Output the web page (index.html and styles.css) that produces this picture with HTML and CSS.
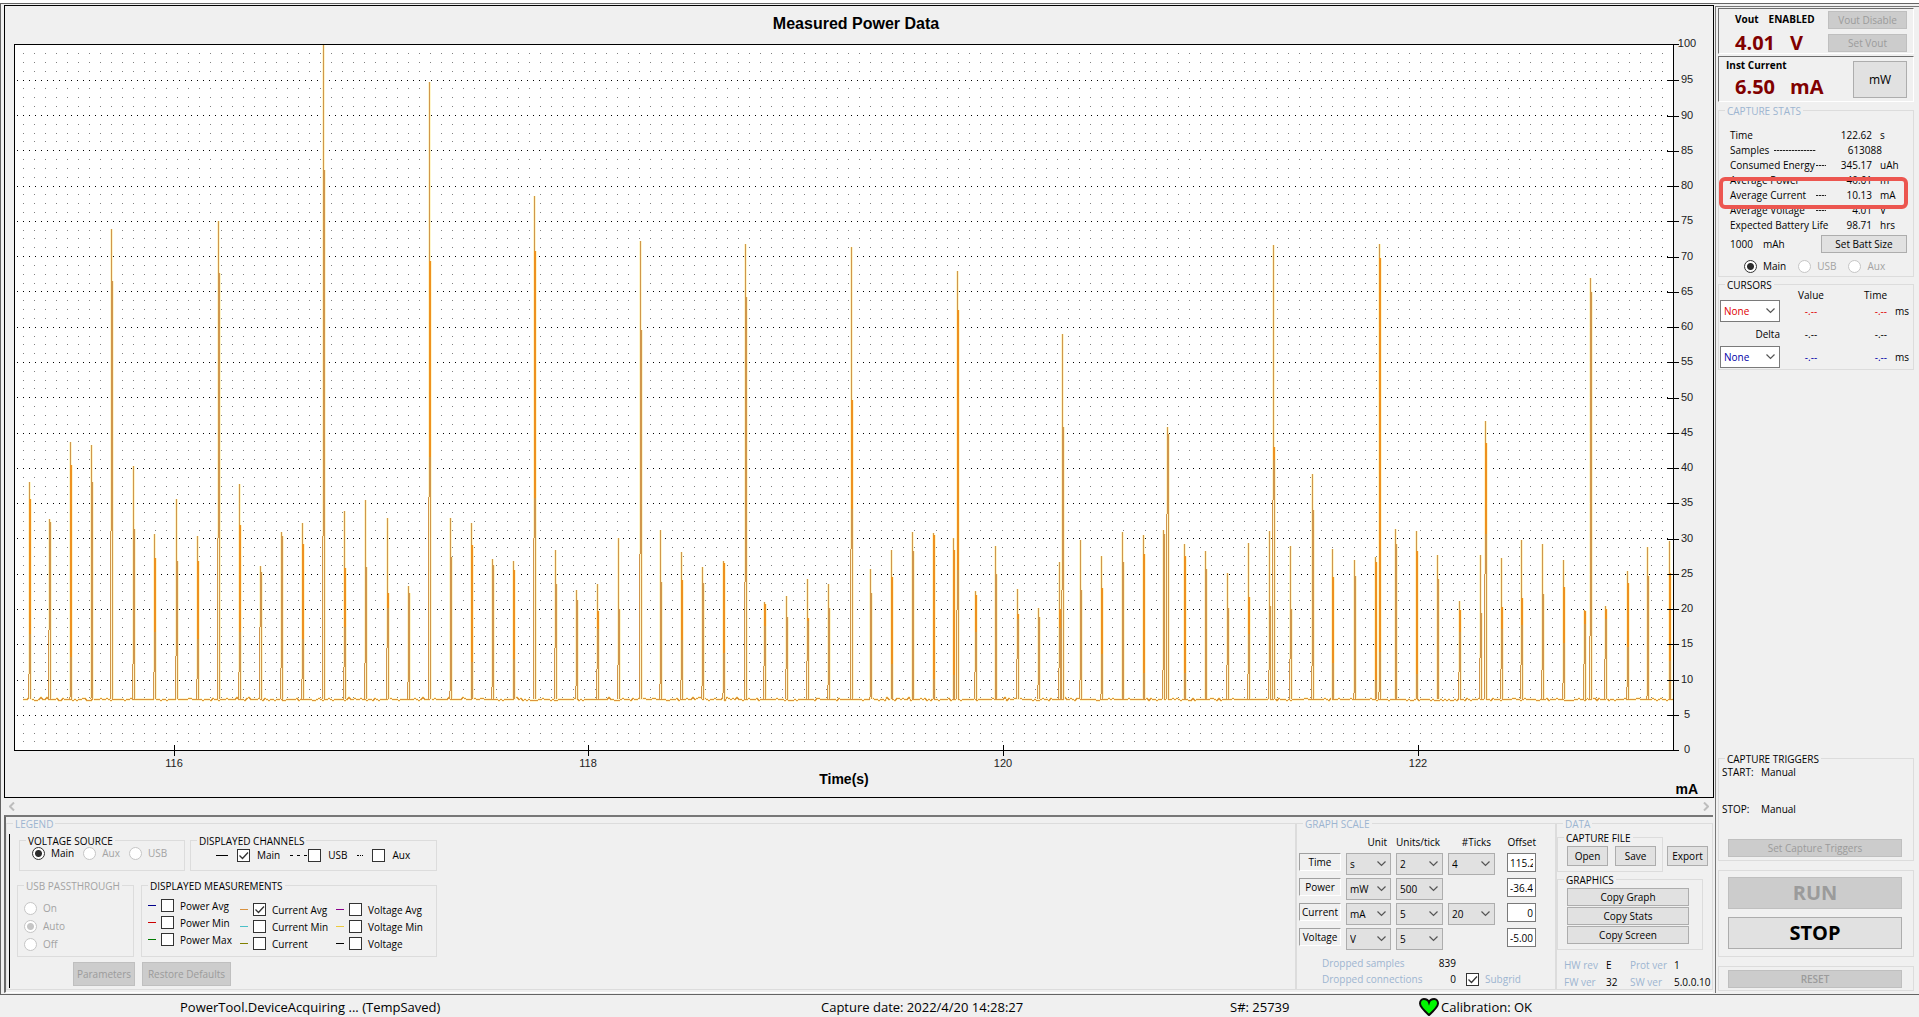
FILE: index.html
```html
<!DOCTYPE html>
<html lang="en">
<head>
<meta charset="utf-8">
<title>PowerTool</title>
<link rel="stylesheet" href="styles.css">
</head>
<body>
<main class="app">
  <div class="workspace">
    <section class="chart">
      <h1 class="chart-title">Measured Power Data</h1>
      <div class="plot" id="plot">
        <svg class="trace" id="trace" shape-rendering="crispEdges"></svg>
      </div>
      <div class="chart-foot">
        <span class="x-title">Time(s)</span>
        <span class="y-unit">mA</span>
      </div>
    </section>
    <div class="scroller">
      <svg width="6" height="9" viewBox="0 0 6 9"><path d="M5 .5 1 4.500 5 8.500" fill="none" stroke="#bdbdbd" stroke-width="2"/></svg>
      <svg width="6" height="9" viewBox="0 0 6 9"><path d="M1 .5 5 4.500 1 8.500" fill="none" stroke="#bdbdbd" stroke-width="2"/></svg>
    </div>
    <section class="panel">
      <fieldset class="group legend-group">
        <legend class="blue">LEGEND</legend>
        <div class="legend-body">
          <div class="legend-row top">
            <fieldset class="group source">
              <legend>VOLTAGE SOURCE</legend>
              <div class="options">
                <label><input type="radio" name="source" checked>Main</label>
                <label class="off"><input type="radio" name="source" disabled>Aux</label>
                <label class="off"><input type="radio" name="source" disabled>USB</label>
              </div>
            </fieldset>
            <fieldset class="group channels">
              <legend>DISPLAYED CHANNELS</legend>
              <div class="channel-list">
                <label><i class="line solid"></i><input type="checkbox" checked>Main</label>
                <label><i class="line dashed"></i><input type="checkbox">USB</label>
                <label><i class="line dotted"></i><input type="checkbox">Aux</label>
              </div>
            </fieldset>
          </div>
          <div class="legend-row">
            <fieldset class="group pass">
              <legend class="off">USB PASSTHROUGH</legend>
              <div class="pass-list off">
                <label><input type="radio" name="pass" disabled>On</label>
                <label><input type="radio" name="pass" disabled checked>Auto</label>
                <label><input type="radio" name="pass" disabled>Off</label>
              </div>
            </fieldset>
            <fieldset class="group measures">
              <legend>DISPLAYED MEASUREMENTS</legend>
              <div class="measure-grid">
                <div class="measure-col first">
                  <label><i class="key navy"></i><input type="checkbox">Power Avg</label>
                  <label><i class="key red"></i><input type="checkbox">Power Min</label>
                  <label><i class="key green"></i><input type="checkbox">Power Max</label>
                </div>
                <div class="measure-col">
                  <label><i class="key orange"></i><input type="checkbox" checked>Current Avg</label>
                  <label><i class="key cyan"></i><input type="checkbox">Current Min</label>
                  <label><i class="key olive"></i><input type="checkbox">Current</label>
                </div>
                <div class="measure-col">
                  <label><i class="key purple"></i><input type="checkbox">Voltage Avg</label>
                  <label><i class="key yellow"></i><input type="checkbox">Voltage Min</label>
                  <label><i class="key black"></i><input type="checkbox">Voltage</label>
                </div>
              </div>
            </fieldset>
          </div>
          <div class="legend-buttons">
            <button class="btn params" disabled>Parameters</button>
            <button class="btn restore" disabled>Restore Defaults</button>
          </div>
        </div>
      </fieldset>

      <fieldset class="group scale-group">
        <legend class="blue">GRAPH SCALE</legend>
        <div class="scale-grid">
          <span></span><span class="head">Unit</span><span class="head">Units/tick</span><span class="head">#Ticks</span><span class="head">Offset</span>
          <span class="tag">Time</span>
          <select class="combo" aria-label="Time unit"><option>s</option></select>
          <select class="combo" aria-label="Time units per tick"><option>2</option></select>
          <select class="combo" aria-label="Time ticks"><option>4</option></select>
          <input class="num cut" type="text" aria-label="Time offset" value="115.27">
          <span class="tag">Power</span>
          <select class="combo" aria-label="Power unit"><option>mW</option></select>
          <select class="combo" aria-label="Power units per tick"><option>500</option></select>
          <span></span>
          <input class="num cut" type="text" aria-label="Power offset" value="-36.43">
          <span class="tag">Current</span>
          <select class="combo" aria-label="Current unit"><option>mA</option></select>
          <select class="combo" aria-label="Current units per tick"><option>5</option></select>
          <select class="combo" aria-label="Current ticks"><option>20</option></select>
          <input class="num" type="text" aria-label="Current offset" value="0">
          <span class="tag">Voltage</span>
          <select class="combo" aria-label="Voltage unit"><option>V</option></select>
          <select class="combo" aria-label="Voltage units per tick"><option>5</option></select>
          <span></span>
          <input class="num" type="text" aria-label="Voltage offset" value="-5.00">
        </div>
        <div class="dropped">
          <span class="blue">Dropped samples</span><span class="count">839</span><span></span>
          <span class="blue">Dropped connections</span><span class="count">0</span>
          <label class="blue"><input type="checkbox" checked>Subgrid</label>
        </div>
      </fieldset>

      <fieldset class="group data-group">
        <legend class="blue">DATA</legend>
        <div class="file-row">
          <fieldset class="group file">
            <legend>CAPTURE FILE</legend>
            <div class="file-buttons">
              <button class="btn">Open</button>
              <button class="btn">Save</button>
            </div>
          </fieldset>
          <button class="btn export">Export</button>
        </div>
        <fieldset class="group graphics">
          <legend>GRAPHICS</legend>
          <div class="copy-list">
            <button class="btn">Copy Graph</button>
            <button class="btn">Copy Stats</button>
            <button class="btn">Copy Screen</button>
          </div>
        </fieldset>
        <dl class="versions">
          <dt>HW rev</dt><dd>E</dd><dt>Prot ver</dt><dd>1</dd>
          <dt>FW ver</dt><dd>32</dd><dt>SW ver</dt><dd>5.0.0.10</dd>
        </dl>
      </fieldset>
    </section>
  </div>

  <aside class="side">
    <section class="readout">
      <div class="readout-text">
        <div class="readout-head"><b>Vout</b><b>ENABLED</b></div>
        <div class="big"><span>4.01</span><span>V</span></div>
      </div>
      <div class="readout-buttons">
        <button class="btn" disabled>Vout Disable</button>
        <button class="btn" disabled>Set Vout</button>
      </div>
    </section>
    <section class="readout">
      <div class="readout-text">
        <div class="readout-head inst"><b>Inst Current</b></div>
        <div class="big"><span>6.50</span><span>mA</span></div>
      </div>
      <button class="btn unit">mW</button>
    </section>
    <fieldset class="group stats">
      <legend class="blue">CAPTURE STATS</legend>
      <table class="stat-table">
        <tr><th>Time</th><td>122.62</td><td class="u">s</td></tr>
        <tr><th><span>Samples<i class="leader long"></i></span></th><td class="wide" colspan="2">613088</td></tr>
        <tr><th><span>Consumed Energy<i class="leader"></i></span></th><td>345.17</td><td class="u">uAh</td></tr>
        <tr><th>Average Power</th><td>40.61</td><td class="u">m</td></tr>
        <tr class="marked"><th><span>Average Current<i class="leader"></i></span></th><td>10.13</td><td class="u">mA</td></tr>
        <tr><th><span>Average Voltage<i class="leader"></i></span></th><td>4.01</td><td class="u">V</td></tr>
        <tr><th>Expected Battery Life</th><td>98.71</td><td class="u">hrs</td></tr>
      </table>
      <div class="battery"><span>1000</span><span>mAh</span><button class="btn">Set Batt Size</button></div>
      <div class="options stat-options">
        <label><input type="radio" name="stat" checked>Main</label>
        <label class="off"><input type="radio" name="stat" disabled>USB</label>
        <label class="off"><input type="radio" name="stat" disabled>Aux</label>
      </div>
    </fieldset>
    <fieldset class="group cursors">
      <legend>CURSORS</legend>
      <div class="cursor-grid">
        <span></span><span>Value</span><span class="time">Time</span><span></span>
        <select class="combo white c-red" aria-label="Cursor 1"><option>None</option></select><span class="c-red">-.--</span><span class="time c-red">-.--</span><span class="ms">ms</span>
        <span class="delta">Delta</span><span>-.--</span><span class="time">-.--</span><span></span>
        <select class="combo white c-blue" aria-label="Cursor 2"><option>None</option></select><span class="c-blue">-.--</span><span class="time c-blue">-.--</span><span class="ms">ms</span>
      </div>
    </fieldset>
    <div class="side-space"></div>
    <fieldset class="group triggers">
      <legend>CAPTURE TRIGGERS</legend>
      <dl class="trigger-list"><dt>START:</dt><dd>Manual</dd><dt>STOP:</dt><dd>Manual</dd></dl>
      <button class="btn" disabled>Set Capture Triggers</button>
    </fieldset>
    <div class="group run-box">
      <button class="btn large" disabled>RUN</button>
      <button class="btn large">STOP</button>
    </div>
    <div class="group reset-box"><button class="btn reset" disabled>RESET</button></div>
  </aside>
</main>
<footer class="status">
  <span>PowerTool.DeviceAcquiring ... (TempSaved)</span>
  <span>Capture date: 2022/4/20 14:28:27</span>
  <span>S#: 25739</span>
  <span class="calib"><svg width="20" height="18" viewBox="0 0 20 18"><path d="M10 4.500C9 1.500 6.500 1 4.800 1 2.500 1 1 3 1 5.500 1 9 5 12.500 10 17c5-4.500 9-8 9-11.500C19 3 17.500 1 15.200 1 13.500 1 11 1.500 10 4.500z" fill="#00f800" stroke="#0a0a0a" stroke-width="2"/></svg>Calibration: OK</span>
</footer>
<script src="script.js"></script>
</body>
</html>
```
FILE: styles.css
```css
* { box-sizing: border-box; }

body {
  margin: 0;
  min-height: 100vh;
  display: flex;
  flex-direction: column;
  background: #f0f0f0;
  color: #000;
  font: 10px/14px "Open Sans", "Noto Sans", sans-serif;
}

button, input, select { font: inherit; color: inherit; margin: 0; }

.app {
  flex: 1;
  display: flex;
  margin-top: 3px;
  padding: 1px 0 1px 3px;
  border: solid #646464;
  border-width: 1px 0 1px 1px;
  box-shadow: 0 -3px #fff;
}
.workspace { flex: 1; min-width: 0; display: flex; flex-direction: column; }

/* Chart */
.chart {
  flex: 1;
  display: flex;
  flex-direction: column;
  margin-right: 1px;
  padding: 0 39px 0 9px;
  border: 1px solid #000;
  font-family: "Liberation Sans", Arial, sans-serif;
}
.chart-title { margin: 0; height: 38px; font-size: 16px; line-height: 36px; text-align: center; padding-left: 24px; }
.plot { flex: 1; position: relative; border: 1px solid #000; background: #fff; min-height: 300px; }
.trace { position: absolute; inset: 0; width: 100%; height: 100%; }
.x-tick { position: absolute; bottom: -6px; width: 1px; height: 11px; background: #000; }
.y-tick { position: absolute; right: -6px; width: 12px; height: 1px; background: #000; }
.x-label, .y-label { position: absolute; width: 20px; font-size: 11px; line-height: 12px; text-align: center; color: #222; }
.x-label { bottom: -19px; margin-left: -10px; }
.y-label { right: -24px; margin-top: -7px; }
.chart-foot { height: 46px; position: relative; font-size: 14px; line-height: 16px; font-weight: bold; }
.x-title { display: block; padding-top: 20px; text-align: center; }
.y-unit { position: absolute; right: -24px; bottom: 0; }

.scroller { height: 17px; display: flex; justify-content: space-between; align-items: center; padding: 0 6px 0 5px; }

/* Group boxes */
.group { margin: 0; padding: 0; min-width: 0; border: 1px solid #dcdcdc; }
legend { height: 12px; margin-left: 6px; padding: 0 2px; line-height: 14px; }
.blue { color: #9db5d0; }
.off { color: #a3a3a3; }

.panel {
  display: flex;
  margin-right: 2px;
  padding-bottom: 2px;
  border: solid #6a6a6a;
  border-width: 2px 0 0 2px;
  border-top-color: #777;
  border-bottom: 1px solid #fff;
}
label { display: flex; align-items: center; gap: 6px; white-space: nowrap; }

input[type="radio"], input[type="checkbox"] {
  appearance: none;
  width: 13px;
  height: 13px;
  flex: none;
  border: 1px solid #333;
  background: #fff;
}
input[type="radio"] { border-radius: 50%; }
input[type="radio"]:disabled { border-color: #c6c6c6; }
input[type="radio"]:checked { background: radial-gradient(circle, #2b2b2b 0 3px, #fff 4px); }
input[type="radio"]:checked:disabled { background: radial-gradient(circle, #c6c6c6 0 3px, #fff 4px); }
input[type="checkbox"]:checked {
  background: #fff url("data:image/svg+xml,%3Csvg xmlns='http://www.w3.org/2000/svg' viewBox='0 0 11 11'%3E%3Cpath d='M1.500 5.500l3 3 5.500-6' fill='none' stroke='%23333' stroke-width='1.300'/%3E%3C/svg%3E");
}

.btn {
  padding: 0;
  height: 18px;
  border: 1px solid #adadad;
  background: #e1e1e1;
  color: #000;
  line-height: 14px;
  text-align: center;
  white-space: nowrap;
}
.btn:disabled { border-color: #bfbfbf; background: #ccc; color: #9b9b9b; }

/* Legend */
.legend-group { flex: 1; border-left-color: #e4e4e4; }
.legend-body { margin: 5px 0 0 2px; min-height: 154px; border-left: 1px solid #000; }
.legend-row { display: flex; gap: 7px; padding-left: 7px; margin-bottom: 5px; }
.legend-row.top { gap: 5px; padding-left: 9px; margin-bottom: 8px; }
.source { width: 166px; height: 37px; }
.channels { width: 247px; height: 37px; }
.options { display: flex; gap: 9px; padding-left: 12px; }
.channel-list { display: flex; gap: 10px; padding: 2px 0 0 25px; }
.channel-list label { gap: 7px; }
.line { width: 12px; border-top: 1px solid #000; }
.channel-list .line { margin-right: 2px; }
.channel-list .dashed { width: 18px; margin-right: -7px; border: 0; height: 1px; background: repeating-linear-gradient(90deg, #000 0 3px, transparent 3px 7px); }
.channel-list .dotted { width: 6px; border-top-style: dotted; }
.pass { width: 117px; height: 78px; }
.pass-list { padding: 8px 0 0 6px; }
.pass-list label { height: 18px; }
.measures { width: 296px; height: 78px; }
.measure-grid { display: flex; padding-left: 6px; }
.measure-col { width: 96px; padding-top: 10px; }
.measure-col.first { width: 92px; padding-top: 6px; }
.measure-col label { height: 17px; }
.key { width: 8px; height: 1px; margin-right: -1px; background: #000; }
.navy { background: #00008b; }
.red { background: #c00; }
.green { background: #007a00; }
.orange { background: #d8923f; }
.cyan { background: #4bc0c8; }
.olive { background: #808000; }
.purple { background: #8b008b; }
.yellow { background: #eecb3c; }
.legend-buttons { display: flex; gap: 7px; padding-left: 63px; }
.legend-buttons .btn { height: 24px; }
.params { width: 62px; }
.restore { width: 89px; }

/* Graph scale */
.scale-group { width: 260px; }
.scale-grid {
  display: grid;
  grid-template-columns: 42px 45px 47px 47px 36px;
  grid-template-rows: 16px repeat(4, 22px);
  row-gap: 3px;
  column-gap: 5px;
  padding: 5px 0 0 2px;
}
.scale-grid .head { text-align: right; line-height: 16px; padding-right: 4px; white-space: nowrap; }
.scale-grid .head:nth-child(5) { padding-right: 0; }
.tag { height: 18px; border: 1px solid; border-color: #a0a0a0 #fff #fff #a0a0a0; text-align: center; line-height: 17px; }
.combo {
  appearance: none;
  width: 100%;
  height: 22px;
  padding: 0 0 0 3px;
  border: 1px solid #adadad;
  border-radius: 0;
  background: #e1e1e1 url("data:image/svg+xml,%3Csvg xmlns='http://www.w3.org/2000/svg' width='9' height='6'%3E%3Cpath d='M.5.5l4 4 4-4' fill='none' stroke='%23555' stroke-width='1.200'/%3E%3C/svg%3E") no-repeat right 4px center;
}
.combo.white { background-color: #fff; border-color: #7a7a7a; }
.num { width: 29px; height: 19px; justify-self: end; padding: 0 2px; border: 1px solid #7a7a7a; background: #fff; text-align: right; }
.num.cut { text-align: left; }
.dropped { display: grid; grid-template-columns: 100px 34px 1fr; row-gap: 2px; padding: 6px 0 0 25px; white-space: nowrap; }
.dropped label { padding-left: 10px; }
.count { text-align: right; }

/* Data */
.data-group { width: 157px; }
.file-row { display: flex; align-items: flex-start; gap: 4px; padding-top: 2px; }
.file { width: 106px; height: 41px; }
.file-buttons { display: flex; gap: 7px; padding: 3px 0 0 9px; }
.file-buttons .btn, .export { width: 41px; height: 20px; }
.export { margin-top: 15px; }
.graphics { width: 146px; height: 77px; margin: 1px 0 0; }
.copy-list { display: flex; flex-direction: column; gap: 1px; padding: 3px 0 0 9px; }
.copy-list .btn { width: 122px; }
.versions { display: grid; grid-template-columns: 42px 24px 44px auto; row-gap: 3px; margin: 8px 0 0; padding-left: 7px; }
.versions dt { color: #9db5d0; }
.versions dd { margin: 0; }

/* Side column */
.side {
  width: 204px;
  display: flex;
  flex-direction: column;
  margin-top: 1px;
  padding: 1px 5px 2px 2px;
  border: solid #777;
  border-width: 1px 0 0 1px;
}
.readout {
  display: flex;
  justify-content: space-between;
  height: 46px;
  margin-bottom: 2px;
  padding: 2px 6px 0 0;
  border: 1px solid;
  border-color: #6d6d6d #fff #fff #6d6d6d;
}
.readout-head { display: flex; gap: 10px; padding-left: 16px; line-height: 16px; }
.readout-head.inst { padding-left: 7px; line-height: 12px; }
.big { display: flex; gap: 15px; padding-left: 16px; color: #800000; font-size: 20px; line-height: 32px; font-weight: bold; }
.readout-buttons { display: flex; flex-direction: column; gap: 5px; }
.readout-buttons .btn { width: 79px; }
.unit { width: 54px; height: 37px; margin-top: 2px; font-size: 12px; }

.stats { height: 173px; }
.stat-table { table-layout: fixed; border-spacing: 0; width: 180px; margin: 12px 0 0 11px; }
.stat-table th, .stat-table td { padding: 0; height: 15px; line-height: 15px; font-weight: normal; text-align: right; white-space: nowrap; }
.stat-table th { width: 100px; text-align: left; }
.stat-table th span { display: flex; align-items: center; }
.stat-table td { width: 42px; }
.stat-table .wide { width: auto; padding-right: 28px; }
.stat-table .u { width: 38px; padding-left: 8px; text-align: left; }
.leader { width: 10px; height: 1px; margin-left: auto; margin-right: 4px; background: repeating-linear-gradient(90deg, #222 0 2px, #aaa 2px 3px); }
.leader.long { width: 42px; margin-right: 14px; }
.marked { position: relative; }
.marked::after {
  content: "";
  position: absolute;
  inset: -11px 2px -6px -11px;
  border: 4px solid #ec5650;
  border-radius: 6px;
}
.battery { display: flex; align-items: center; gap: 10px; padding: 2px 6px 0 11px; }
.battery .btn { width: 86px; margin-left: auto; }
.stat-options { gap: 12px; padding: 6px 0 0 25px; }

.cursors { height: 92px; margin-top: 1px; }
.cursor-grid {
  display: grid;
  grid-template-columns: 60px 62px 45px 1fr;
  grid-template-rows: 10px 22px 24px 22px;
  align-items: center;
  text-align: center;
  padding-left: 1px;
}
.cursor-grid .delta, .cursor-grid .time { text-align: right; }
.cursor-grid .ms { text-align: left; padding-left: 8px; }
.c-red { color: #e00000; }
.c-blue { color: #0000a8; }

.side-space { flex: 1; }
.triggers { height: 109px; margin-bottom: 9px; }
.trigger-list { display: grid; grid-template-columns: 39px auto; row-gap: 23px; margin: 1px 0 23px; padding-left: 3px; }
.trigger-list dd { margin: 0; }
.triggers .btn, .run-box .btn, .reset-box .btn { display: block; width: 174px; margin-left: 9px; }
.run-box { height: 87px; margin-bottom: 9px; padding-top: 6px; }
.run-box .btn { height: 32px; margin-bottom: 8px; font-size: 20px; line-height: 28px; font-weight: bold; }
.reset-box { padding: 3px 0 2px; }
.reset-box .reset { font-weight: 600; }

.status {
  display: grid;
  grid-template-columns: 641fr 409fr 189fr 500fr;
  align-items: center;
  height: 22px;
  padding: 2px 0 0 180px;
  font-size: 13px;
  line-height: 18px;
  white-space: nowrap;
}
.calib { display: flex; align-items: center; gap: 2px; }
```
FILE: script.js
```js
// Pulse coordinates are stored for a 1658 x 705 plot and scaled to its real size.
const W = 1658, H = 705, BASE = 654, OX = 15, OY = 45;
const NS = "http://www.w3.org/2000/svg";
const svg = document.getElementById("trace");
const plot = document.getElementById("plot");
const DULL = "#d0964c", BRIGHT = "#ee9020", HALO = "#fff6cc";

// Pulses: x, peak, where it widens, where it splits, bright flag.
const pulses = [
  [29,482,499,634,1],[49,519,522,590,0],[70,442,465,657,1],[91,445,482,658,0],[111,229,281,491,0],
  [133,466,529,624,0],[154,534,558,632,1],[176,499,561,616,0],[197,536,561,639,1],[218,221,273,498,0],
  [239,484,525,632,1],[260,566,572,587,0],[281,532,536,628,0],[302,523,544,639,1],[323,44,170,496,0],
  [344,511,568,627,1],[365,500,567,623,0],[387,518,593,608,1],[408,586,593,642,0],[429,82,261,457,1],
  [450,518,557,651,0],[471,523,545,662,1],[492,559,565,647,0],[513,561,570,659,1],[534,196,251,498,1],
  [555,550,584,608,0],[576,590,600,646,0],[597,584,611,629,1],[618,538,609,625,0],[640,241,330,514,0],
  [660,530,582,644,0],[681,552,580,640,1],[702,567,583,646,0],[723,561,563,653,1],[745,244,297,542,0],
  [764,602,604,626,1],[786,596,617,629,0],[807,579,618,621,1],[828,584,608,645,0],[851,247,400,509,1],
  [870,569,593,657,0],[891,550,577,664,1],[912,532,551,667,0],[933,533,535,679,1],[953,538,550,675,1],
  [957,271,310,570,1],[975,591,595,632,1],[995,546,574,664,0],[1017,589,614,619,1],[1038,608,617,645,0],
  [1059,562,609,628,1],[1062,334,427,550,0],[1080,540,590,640,0],[1101,556,588,654,1],[1122,532,562,660,0],
  [1143,535,554,673,1],[1163,530,534,630,0],[1167,427,434,474,0],[1184,544,556,673,1],[1205,551,569,669,0],
  [1227,573,608,625,0],[1248,543,597,634,1],[1269,531,606,630,0],[1273,245,447,460,1],[1290,546,609,619,0],
  [1312,474,510,626,0],[1332,549,577,663,1],[1354,560,576,653,0],[1375,557,562,680,1],[1379,244,258,652,1],
  [1395,529,544,674,0],[1416,531,551,674,1],[1437,555,579,666,0],[1459,601,610,632,1],[1480,555,613,618,0],
  [1485,421,443,534,1],[1501,558,607,629,1],[1521,540,598,625,1],[1542,544,594,630,0],[1563,560,587,643,1],
  [1584,610,611,624,1],[1590,278,292,596,0],[1605,606,609,619,1],[1627,571,583,647,1],[1647,547,576,656,0],
  [1669,541,573,661,1]
];

function add(tag, attrs) {
  const el = document.createElementNS(NS, tag);
  for (const k in attrs) el.setAttribute(k, attrs[k]);
  svg.appendChild(el);
}
function bar(x, y1, y2, w, fill) {
  if (y2 > y1) add("rect", { x: x, y: y1, width: w, height: y2 - y1, fill: fill });
}

function draw() {
  const w = plot.clientWidth, h = plot.clientHeight;
  const sx = function (x) { return Math.round((x - OX) * w / W); };
  const sy = function (y) { return Math.round((y - OY) * h / H); };
  const base = Math.round(BASE * h / H);
  svg.textContent = "";
  svg.setAttribute("viewBox", "0 0 " + w + " " + h);

  // Dotted grid: every fourth row is a major one.
  for (let k = 1; k < 80; k++) {
    const y = sy(44.3 + 8.825 * k) + 0.5;
    const major = k % 4 === 0;
    add("line", {
      x1: major ? 2 : 8, x2: w, y1: y, y2: y,
      stroke: major ? "#000" : "#808080",
      "stroke-dasharray": major ? "1 5" : "1 10"
    });
  }

  // Slightly noisy idle current between the pulses.
  let points = "", seed = 7;
  for (let x = 8; x <= w; x += 2) {
    seed = (seed * 1103515245 + 12345) % 2147483648;
    const r = seed / 2147483648;
    const y = base + (r > 0.96 ? -2 : r > 0.8 ? 1 : r > 0.65 ? -1 : 0) + 0.5;
    points += x + "," + y + " ";
  }
  add("polyline", { points: points, fill: "none", stroke: HALO, "stroke-width": 3 });
  add("polyline", { points: points, fill: "none", stroke: "#dc943a", "stroke-width": 1 });

  pulses.forEach(function (p) {
    const x = sx(p[0]), top = sy(p[1]), wide = sy(p[2]), split = sy(p[3]);
    const foot = Math.min(split + 40, base);
    bar(x - 1, top, wide, 3, HALO);
    bar(x - 1, wide, base, 4, HALO);
    bar(x, top, wide, 1, DULL);
    bar(x, wide, split, 2, p[4] ? BRIGHT : DULL);
    bar(x, split, foot, 1, DULL);
    bar(x - 1, foot, base, 1, DULL);
    bar(x + 1, split, base, 1, DULL);
  });
}

function mark(cls, style, text) {
  const el = document.createElement("span");
  el.className = cls;
  el.style.cssText = style;
  if (text !== undefined) el.textContent = text;
  plot.appendChild(el);
}
[[116, 159], [118, 573], [120, 988], [122, 1403]].forEach(function (t) {
  const left = "left:" + (t[1] / W * 100) + "%";
  mark("x-tick", left);
  mark("x-label", left, t[0]);
});
for (let v = 0; v <= 100; v += 5) {
  const top = "top:calc(" + (100 - v) + "% - " + (v === 100 ? 1 : 0) + "px)";
  mark("y-tick", top);
  mark("y-label", top, v);
}

draw();
window.addEventListener("resize", draw);
```
